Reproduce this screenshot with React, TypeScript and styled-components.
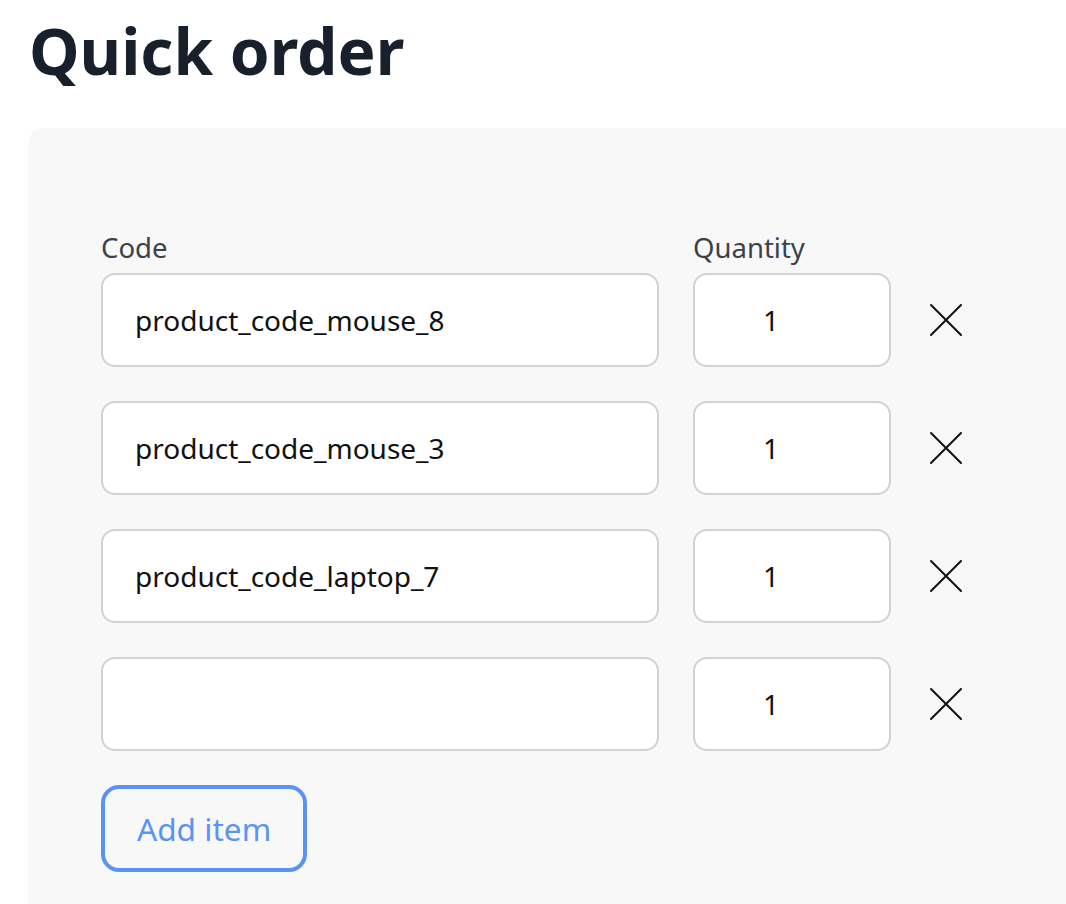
import React from "react";
import styled, { createGlobalStyle } from "styled-components";

const Global = createGlobalStyle`
  html, body { margin: 0; padding: 0; background: #ffffff; }
  body { font-family: "Noto Sans", "Open Sans", sans-serif; overflow: hidden; }
`;

const Page = styled.div`
  width: 1066px;
  height: 904px;
  overflow: hidden;
  padding-left: 28px;
  box-sizing: border-box;
`;

const Title = styled.h1`
  margin: 0;
  padding: 7px 0 0 1px;
  font-size: 64px;
  line-height: 88px;
  font-weight: 700;
  color: #18202b;
  letter-spacing: 0;
`;

const Panel = styled.div`
  margin-top: 33px;
  background: #f8f8f8;
  border-radius: 16px 0 0 0;
  padding: 102px 0 60px 73px;
  min-height: 800px;
`;

const Grid = styled.div`
  display: grid;
  grid-template-columns: 558px 198px 70px;
  column-gap: 34px;
  align-items: center;
`;

const Label = styled.label`
  font-size: 27.5px;
  line-height: 36px;
  color: #3b424c;
  margin-bottom: 7px;
`;

const Row = styled.div`
  display: contents;
`;

const Field = styled.input<{ $center?: boolean }>`
  box-sizing: border-box;
  height: 94px;
  width: 100%;
  margin-bottom: 34px;
  border: 2px solid #d2d2d4;
  border-radius: 14px;
  background: #ffffff;
  font-family: "Noto Sans", "Open Sans", sans-serif;
  font-size: 28px;
  color: #111111;
  padding: ${(p) => (p.$center ? "0 42px 0 0" : "0 32px")};
  text-align: ${(p) => (p.$center ? "center" : "left")};
  outline: none;
`;

const Remove = styled.button`
  margin-bottom: 34px;
  width: 40px;
  height: 40px;
  padding: 0;
  border: none;
  background: transparent;
  display: flex;
  align-items: center;
  justify-content: center;
  cursor: pointer;
  margin-left: 1px;
`;

const AddButton = styled.button`
  height: 87px;
  padding: 0 32px;
  border: 4px solid #5a92f6;
  border-radius: 18px;
  background: transparent;
  color: #5a92f6;
  font-family: "Noto Sans", "Open Sans", sans-serif;
  font-size: 31.6px;
`;

const rows = ["product_code_mouse_8", "product_code_mouse_3", "product_code_laptop_7", ""];

function XIcon() {
  return (
    <svg width="34" height="34" viewBox="0 0 34 34" fill="none">
      <path d="M2 2 L32 32 M32 2 L2 32" stroke="#111" strokeWidth="2" strokeLinecap="round" />
    </svg>
  );
}

export default function App() {
  return (
    <Page>
      <Global />
      <Title>Quick order</Title>
      <Panel>
        <Grid>
          <Label>Code</Label>
          <Label>Quantity</Label>
          <span />
          {rows.map((code, i) => (
            <Row key={i}>
              <Field defaultValue={code} />
              <Field $center defaultValue="1" />
              <Remove aria-label="Remove">
                <XIcon />
              </Remove>
            </Row>
          ))}
        </Grid>
        <AddButton>Add item</AddButton>
      </Panel>
    </Page>
  );
}
